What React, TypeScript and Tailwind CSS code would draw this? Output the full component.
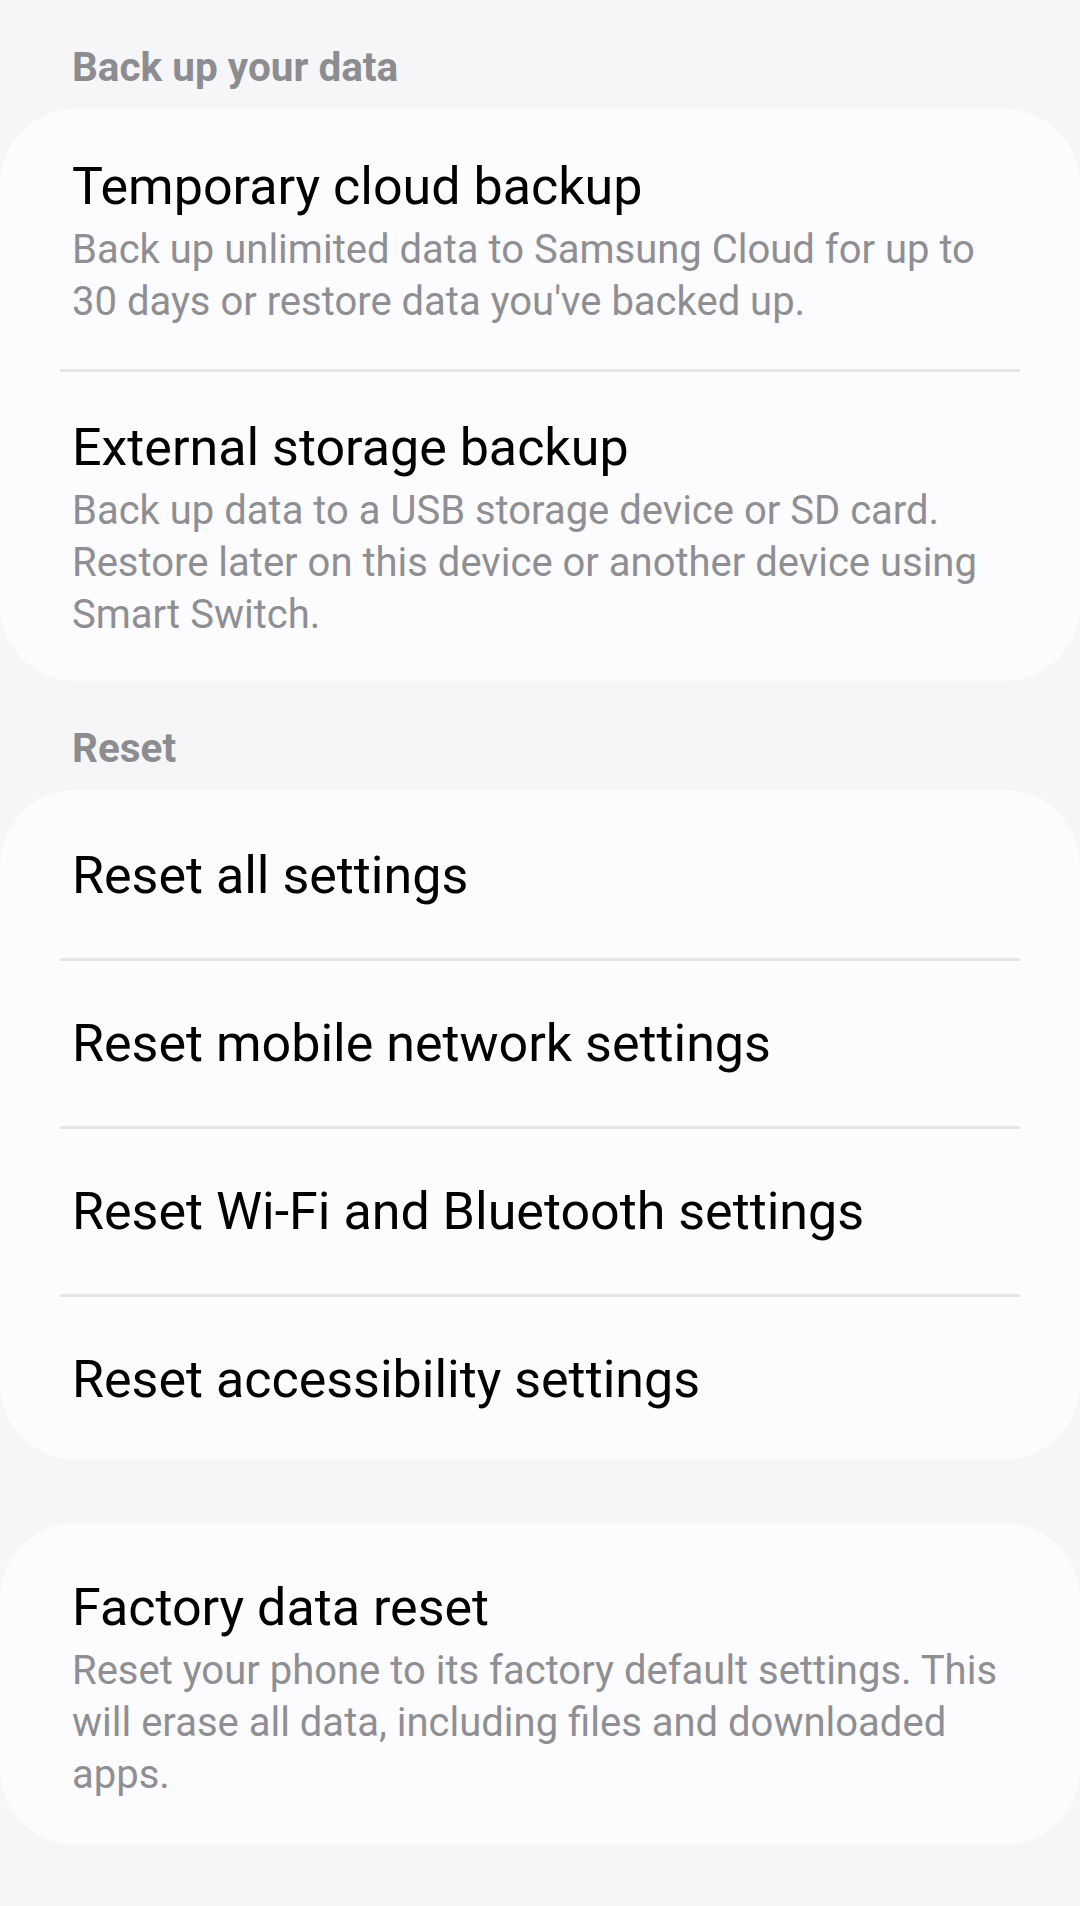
// Backup and reset settings screen (One UI style list cards).
import React from "react";

type Item = { title: string; summary?: string };

const backupItems: Item[] = [
  {
    title: "Temporary cloud backup",
    summary:
      "Back up unlimited data to Samsung Cloud for up to 30 days or restore data you've backed up.",
  },
  {
    title: "External storage backup",
    summary:
      "Back up data to a USB storage device or SD card. Restore later on this device or another device using Smart Switch.",
  },
];

const resetItems = [
  "Reset all settings",
  "Reset mobile network settings",
  "Reset Wi-Fi and Bluetooth settings",
  "Reset accessibility settings",
];

function SectionHeader({ label }: { label: string }) {
  return (
    <h2 className="pl-[72px] pt-[45px] pb-[20px] text-[40.5px] leading-[44px] font-bold text-[#8d8d91]">
      {label}
    </h2>
  );
}

function Divider() {
  return <div className="mx-[60px] h-[3px] bg-[#e5e5e7]" />;
}

function Title({ children }: { children: React.ReactNode }) {
  return <div className="text-[52px] leading-[62px] text-black">{children}</div>;
}

function Summary({ children }: { children: React.ReactNode }) {
  return (
    <div className="mt-[6px] text-[40px] leading-[52px] text-[#8f8f93]">{children}</div>
  );
}

export default function App() {
  return (
    <div
      className="min-h-[1906px] bg-[#f6f6f8]"
      style={{ fontFamily: "Roboto, 'Noto Sans', sans-serif" }}
    >
      <SectionHeader label="Back up your data" />
      <section className="rounded-[76px] bg-[#fcfcfe]">
        <div className="pl-[72px] pr-[68px] pt-[47px] pb-[41px]">
          <Title>{backupItems[0].title}</Title>
          <Summary>{backupItems[0].summary}</Summary>
        </div>
        <Divider />
        <div className="pl-[72px] pr-[68px] pt-[45px] pb-[40px]">
          <Title>{backupItems[1].title}</Title>
          <Summary>{backupItems[1].summary}</Summary>
        </div>
      </section>

      <SectionHeader label="Reset" />
      <section className="rounded-[76px] bg-[#fcfcfe] pt-[3px]">
        {resetItems.map((label, i) => (
          <React.Fragment key={label}>
            {i > 0 && <Divider />}
            <div
              className={
                i === resetItems.length - 1
                  ? "pl-[72px] pr-[68px] pt-[52px] pb-[49px]"
                  : "pl-[72px] pr-[68px] pt-[52px] pb-[51px]"
              }
            >
              <Title>{label}</Title>
            </div>
          </React.Fragment>
        ))}
      </section>

      <section className="mt-[63px] rounded-[76px] bg-[#fcfcfe]">
        <div className="pl-[72px] pr-[68px] pt-[54px] pb-[44px]">
          <Title>Factory data reset</Title>
          <Summary>
            Reset your phone to its factory default settings. This will erase all data,
            including files and downloaded apps.
          </Summary>
        </div>
      </section>
    </div>
  );
}
